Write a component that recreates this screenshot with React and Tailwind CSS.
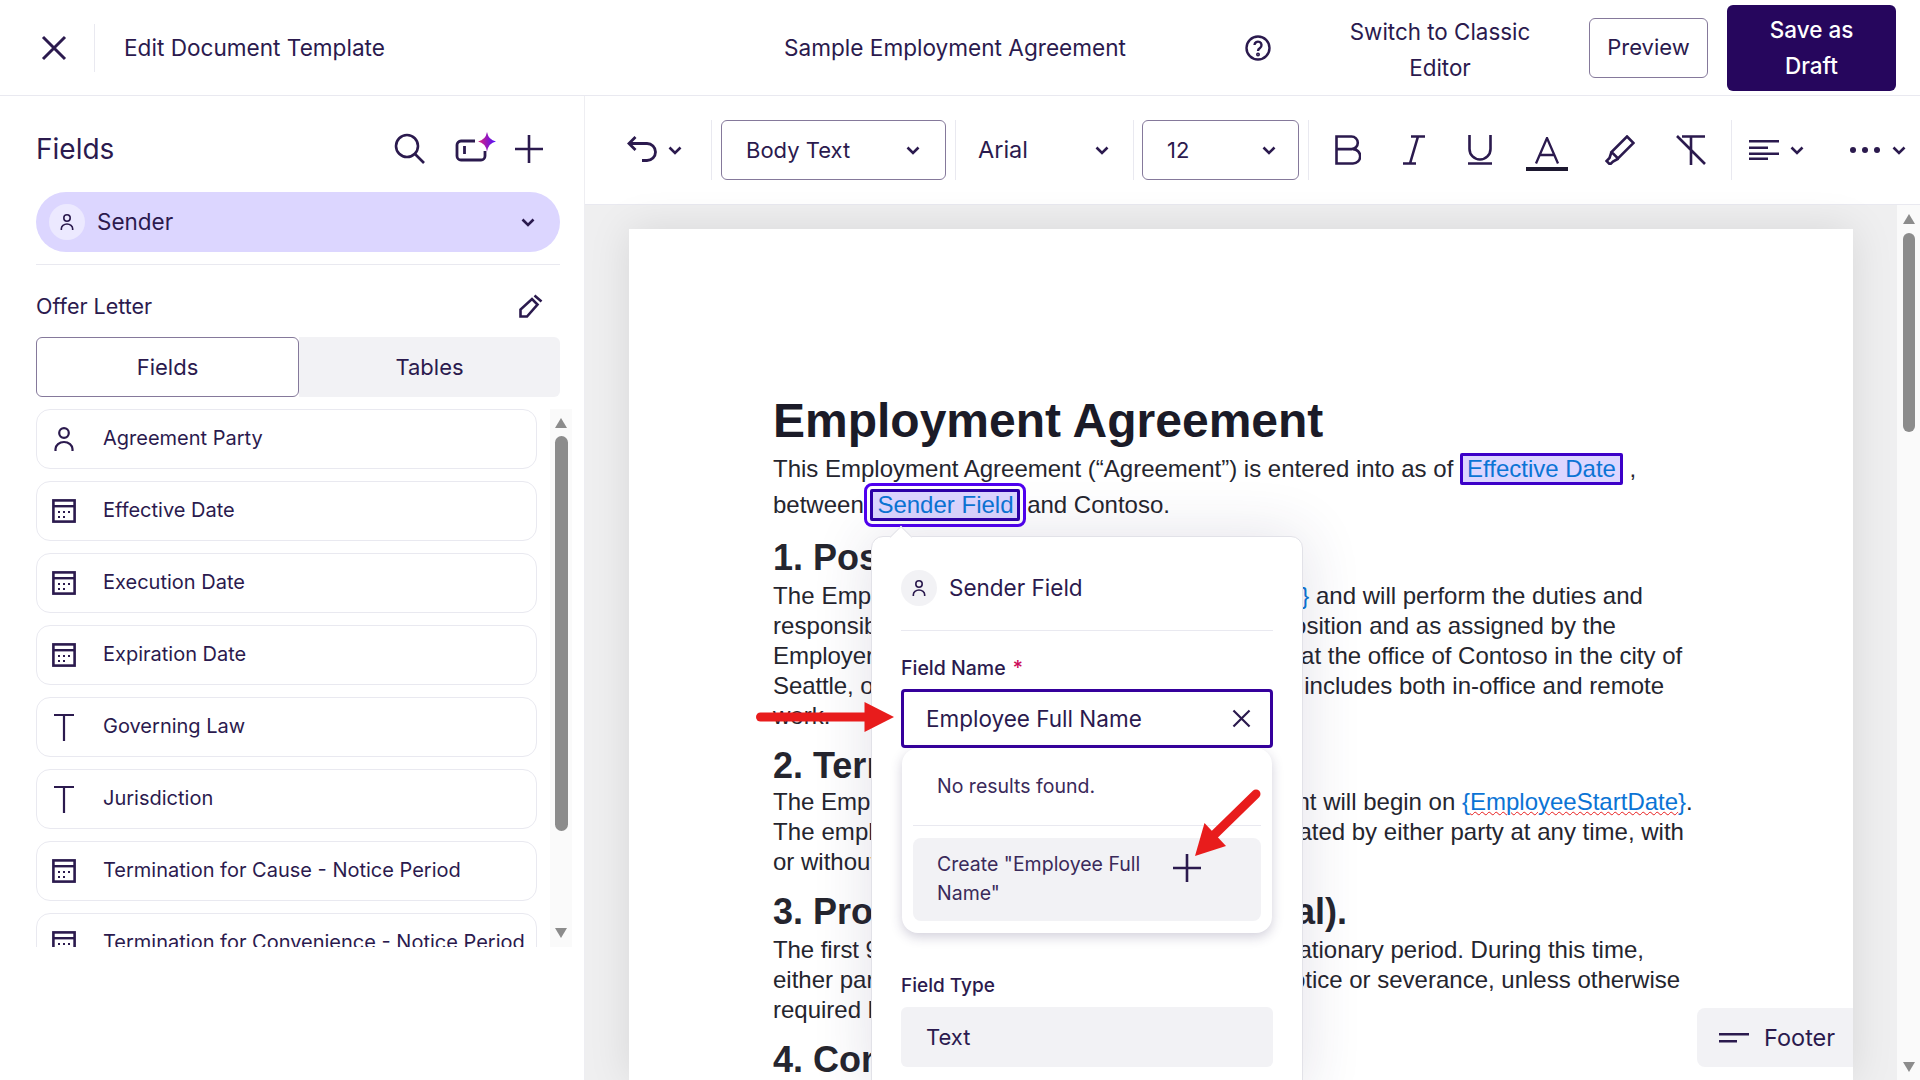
import React from 'react';

const UI_FONT = { fontFamily: 'Inter, sans-serif' };

const Chevron = ({ className = '' }) => (
    <svg width="14" height="9" viewBox="0 0 14 9" fill="none" stroke="currentColor" strokeWidth="2.6" className={`shrink-0 ${className}`}>
        <path d="M1.5 1.5 7 7l5.5-5.5" />
    </svg>
);

const PersonIcon = ({ size = 24, sw = 2.2 }) => (
    <svg width={size} height={size} viewBox="0 0 24 24" fill="none" stroke="currentColor" strokeWidth={sw} className="shrink-0">
        <circle cx="12" cy="6" r="4.800" />
        <path d="M3.500 24v-2a8.500 7 0 0 1 17 0v2" />
    </svg>
);

const CalendarIcon = () => (
    <svg width="24" height="24" viewBox="0 0 24 24" fill="none" className="shrink-0">
        <rect x="1.400" y="1.400" width="21.200" height="21.200" stroke="currentColor" strokeWidth="2.600" />
        <rect x="1" y="6" width="22" height="2.400" fill="currentColor" />
        <path d="M6 12h2v2H6zM11 12h2v2h-2zM16 12h2v2h-2zM6 17h2v2H6zM11 17h2v2h-2z" fill="currentColor" />
    </svg>
);

const TextIcon = () => (
    <svg width="24" height="28" viewBox="0 0 24 28" fill="none" stroke="currentColor" strokeWidth="2.200" className="shrink-0">
        <path d="M2 2h20M12 2v26" />
    </svg>
);

const CloseIcon = ({ size = 26, sw = 3 }) => (
    <svg width={size} height={size} viewBox="0 0 26 26" fill="none" stroke="currentColor" strokeWidth={sw} className="shrink-0">
        <path d="M2 2l22 22M24 2 2 24" />
    </svg>
);

const PlusIcon = ({ size = 28 }) => (
    <svg width={size} height={size} viewBox="0 0 28 28" fill="none" stroke="currentColor" strokeWidth="2.600" className="shrink-0">
        <path d="M14 0v28M0 14h28" />
    </svg>
);

const fields = [
    ['person', 'Agreement Party'],
    ['date', 'Effective Date'],
    ['date', 'Execution Date'],
    ['date', 'Expiration Date'],
    ['text', 'Governing Law'],
    ['text', 'Jurisdiction'],
    ['date', 'Termination for Cause - Notice Period'],
    ['date', 'Termination for Convenience - Notice Period'],
];

const FieldRow = ({ type, label }) => (
    <div className="flex h-[60px] shrink-0 items-center rounded-[14px] border border-[#e9e9f0] bg-white">
        <div className="flex w-[66px] justify-center pr-[12px]">
            {type === 'person' && <PersonIcon size={24} />}
            {type === 'date' && <CalendarIcon />}
            {type === 'text' && <TextIcon />}
        </div>
        <span className="pb-[2px] text-[20px] whitespace-nowrap">{label}</span>
    </div>
);

const ScrollArrow = ({ down }) => (
    <svg width="12" height="10" viewBox="0 0 12 10" className="shrink-0" fill="#8c8c8c">
        <path d={down ? 'M0 0h12L6 10z' : 'M6 0l6 10H0z'} />
    </svg>
);

const Sidebar = () => (
    <aside className="flex w-[585px] shrink-0 flex-col border-r border-[#eeeef2] pl-[36px] pr-[24px]">
        <div className="mt-[23px] flex h-[60px] items-center pr-[17px]">
            <h2 className="flex-1 text-[28px]">Fields</h2>
            <svg width="34" height="34" viewBox="0 0 34 34" fill="none" stroke="currentColor" strokeWidth="2.600" className="mr-[29px]">
                <circle cx="15" cy="14" r="11" />
                <path d="M23 22l9 9" />
            </svg>
            <svg width="42" height="36" viewBox="0 0 42 36" fill="none" className="mr-[18px]">
                <defs>
                    <linearGradient id="spark" x1="0" x2="1" y1="0" y2="0">
                        <stop offset="0" stopColor="#e0207a" />
                        <stop offset="1" stopColor="#4a10ff" />
                    </linearGradient>
                </defs>
                <path d="M20 10H6a4 4 0 0 0-4 4v11a4 4 0 0 0 4 4h20a4 4 0 0 0 4-4v-5" stroke="currentColor" strokeWidth="2.800" />
                <path d="M9.500 15v8" stroke="currentColor" strokeWidth="2.800" />
                <path d="M32 1q1.500 8 9 9.500-7.500 1.500-9 10-1.500-8.500-9-10 7.500-1.500 9-9.500z" fill="url(#spark)" />
            </svg>
            <PlusIcon size={28} />
        </div>
        <div className="mt-[13px] flex h-[60px] items-center rounded-full bg-[#dcd6ff] pl-[13px] pr-[25px]">
            <div className="flex h-[36px] w-[36px] items-center justify-center rounded-full bg-[#ece9ff]">
                <PersonIcon size={16} sw={2.4} />
            </div>
            <span className="ml-[12px] flex-1 text-[22.5px]">Sender</span>
            <Chevron />
        </div>
        <div className="mt-[12px] border-t border-[#e9e9f0]" />
        <div className="mt-[26px] flex h-[30px] items-center pr-[17px]">
            <span className="flex-1 text-[21.500px]">Offer Letter</span>
            <svg width="24" height="24" viewBox="0 0 24 24" fill="none" stroke="currentColor" strokeWidth="2.600">
                <path d="M1.500 22.500v-7L13 5l5.500 5.500L8 22.500zM15.500 1.500l7 6" />
            </svg>
        </div>
        <div className="mt-[16px] flex h-[60px] text-[22px]">
            <div className="flex flex-1 items-center justify-center rounded-[6px] border border-[#85799b] bg-white">Fields</div>
            <div className="flex flex-1 items-center justify-center rounded-r-[6px] bg-[#f2f2f5]">Tables</div>
        </div>
        <div className="-mr-[12px] mt-[12px] flex h-[538px] gap-[13px] overflow-hidden">
            <div className="flex w-[501px] shrink-0 flex-col gap-[12px]">
                {fields.map(([type, label]) => (
                    <FieldRow key={label} type={type} label={label} />
                ))}
            </div>
            <div className="flex w-[22px] shrink-0 flex-col items-center bg-[#fafafa] pt-[9px]">
                <ScrollArrow />
                <div className="mt-[8px] h-[395px] w-[13px] rounded-full bg-[#8c8c8c]" />
                <div className="mt-[97px]">
                    <ScrollArrow down />
                </div>
            </div>
        </div>
    </aside>
);

const Divider = ({ className = '' }) => <div className={`h-[60px] w-px shrink-0 bg-[#e9e9f0] ${className}`} />;

const Select = ({ label, className = '' }) => (
    <div className={`flex h-[60px] shrink-0 items-center justify-between rounded-[6px] border border-[#85799b] pl-[24px] ${className}`}>
        <span>{label}</span>
        <Chevron />
    </div>
);

const ToolIcon = ({ w, children }) => (
    <div className={`flex shrink-0 justify-center ${w}`}>{children}</div>
);

const Toolbar = () => (
    <div className="flex h-[109px] shrink-0 items-center border-b border-[#e9e9f0] pl-[42px] text-[22px]">
        <svg width="30" height="26" viewBox="0 0 30 26" fill="none" stroke="currentColor" strokeWidth="2.800" className="mb-[3px] shrink-0">
            <path d="M8.500 1 2 7.500 8.500 14M2 7.500h18a8.500 8.500 0 0 1 0 17h-5" />
        </svg>
        <Chevron className="ml-[11px]" />
        <Divider className="ml-[29px]" />
        <Select label="Body Text" className="ml-[9px] w-[225px] pr-[25px]" />
        <Divider className="ml-[9px]" />
        <div className="flex w-[177px] shrink-0 items-center justify-between pl-[22px] pr-[24px]">
            <span className="text-[23.500px]">Arial</span>
            <Chevron />
        </div>
        <Divider />
        <Select label="12" className="ml-[8px] w-[157px] pr-[22px]" />
        <Divider className="ml-[9px]" />
        <ToolIcon w="w-[78px]">
            <svg width="26" height="30" viewBox="0 0 26 30" fill="none" stroke="currentColor" strokeWidth="2.600">
                <path d="M1.500 14V1.500h15a6.300 6.300 0 0 1 0 12.600h-15zm0 0v14.500h16.500a7.200 7.200 0 0 0 0-14.400" />
            </svg>
        </ToolIcon>
        <ToolIcon w="w-[54px]">
            <svg width="22" height="30" viewBox="0 0 22 30" fill="none" stroke="currentColor" strokeWidth="2.600">
                <path d="M8 1.500h14M0 28.500h13M15 1.500 7 28.500" />
            </svg>
        </ToolIcon>
        <ToolIcon w="ml-[6px] w-[66px]">
            <svg width="24" height="30" viewBox="0 0 24 30" fill="none" stroke="currentColor" strokeWidth="2.600">
                <path d="M1.500 0v14a10.500 10.500 0 0 0 21 0V0M0 28.500h24" />
            </svg>
        </ToolIcon>
        <ToolIcon w="mt-[8px] w-[68px]">
            <svg width="42" height="34" viewBox="0 0 42 34" fill="none">
                <path d="M10 26.500 21 1l11 25.500M13.500 18h15" stroke="currentColor" strokeWidth="2.300" />
                <rect y="30" width="42" height="4" fill="#1d1830" />
            </svg>
        </ToolIcon>
        <ToolIcon w="w-[78px]">
            <svg width="30" height="30" viewBox="0 0 30 30" fill="none" stroke="currentColor" strokeWidth="2.600">
                <path d="M22 1.500 28.500 8 13 23.500 6.500 17zM6.500 17l-2 6-3 3 3.500 3.500 3-3 5.500-3" />
            </svg>
        </ToolIcon>
        <ToolIcon w="w-[64px]">
            <svg width="30" height="30" viewBox="0 0 30 30" fill="none" stroke="currentColor" strokeWidth="2.600">
                <path d="M6 1.500h23M15 1.500V30M1 1l28 28" />
            </svg>
        </ToolIcon>
        <Divider className="ml-[8px]" />
        <svg width="30" height="20" viewBox="0 0 30 20" fill="currentColor" className="ml-[17px] shrink-0">
            <path d="M0 0h30v2.500H0zM0 6.500h19V9H0zM0 12.500h30V15H0zM0 17.500h19V20H0z" />
        </svg>
        <Chevron className="ml-[11px]" />
        <svg width="32" height="6" viewBox="0 0 32 6" fill="currentColor" className="ml-[46px] shrink-0">
            <circle cx="3" cy="3" r="3" />
            <circle cx="15" cy="3" r="3" />
            <circle cx="27" cy="3" r="3" />
        </svg>
        <Chevron className="ml-[10px]" />
    </div>
);

const H2 = ({ children, className = 'mt-[12px] leading-[46px]' }) => (
    <h2 className={`text-[36px] font-bold whitespace-nowrap ${className}`}>{children}</h2>
);

const Line = ({ children }) => <div className="h-[30px] leading-[30px] whitespace-nowrap">{children}</div>;

const FieldTag = ({ children, active }) => (
    <span className={`inline-block rounded-[2px] border-[3px] bg-[#dcd6ff] px-[4px] leading-[26px] text-[#0b74d5] ${active ? 'border-[#2d00a8] outline-[3px] outline-offset-[3px] outline-[#5000f0]' : 'border-[#3c00c8]'}`}>
        {children}
    </span>
);

const DocumentPage = () => (
    <div className="ml-[44px] mt-[24px] flex-1 overflow-hidden bg-white pl-[144px] pt-[158px] text-[24px] text-[#25252e] shadow-[0_0_40px_rgba(0,0,0,0.1)]" style={{ fontFamily: '"Liberation Sans", Arial, sans-serif' }}>
        <h1 className="h-[64px] text-[48px] font-bold leading-[68px] text-[#1b1b28] whitespace-nowrap">Employment Agreement</h1>
        <div className="h-[36px] leading-[35px] whitespace-nowrap">
            This Employment Agreement (“Agreement”) is entered into as of <FieldTag>Effective Date</FieldTag> ,
        </div>
        <div className="h-[36px] leading-[36px] whitespace-nowrap">
            between <FieldTag active>Sender Field</FieldTag> and Contoso.
        </div>
        <H2 className="mt-[12px] leading-[46px]">1. Position and Duties.</H2>
        <Line><span className="tracking-[0.12px]">The Employee will be hired as </span><span className="text-[#0b74d5]">{'{EmployeeJobTitle}'}</span> and will perform the duties and</Line>
        <Line><span className="tracking-[0.05px]">responsibilities typically associated with such a </span>position and as assigned by the</Line>
        <Line><span className="tracking-[-0.05px]">Employer. The Employee shall be working largely </span>at the office of Contoso in the city of</Line>
        <Line><span className="tracking-[-0.1px]">Seattle, or according to the hybrid schedule which </span>includes both in-office and remote</Line>
        <Line>work.</Line>
        <H2 className="mt-[13px] leading-[43px]">2. Term of Employment.</H2>
        <Line>The Employee's employment under this Agreement will begin on <span className="text-[#0b74d5]">{'{'}<span className="underline decoration-wavy decoration-[#e81c1c] decoration-1">EmployeeStartDate</span>{'}'}</span>.</Line>
        <Line><span className="tracking-[0.09px]">The employment relationship shall also be </span>terminated by either party at any time, with</Line>
        <Line>or without cause.</Line>
        <H2>3. Probationary Period (Optional).</H2>
        <Line><span className="tracking-[-0.09px]">The first 90 days of the employment will be a </span>probationary period. During this time,</Line>
        <Line>either party may terminate employment without notice or severance, unless otherwise</Line>
        <Line>required by law.</Line>
        <H2>4. Compensation.</H2>
    </div>
);

const FieldPopover = () => (
    <div className="absolute left-[871px] top-[536px] h-[560px] w-[432px] rounded-[12px] border border-[#e2e2e8] bg-white px-[29px] pt-[33px] shadow-[0_0_60px_rgba(50,40,90,0.14)]">
        <div className="absolute -top-[8px] left-[21px] h-[16px] w-[16px] rotate-45 border-l border-t border-[#e2e2e8] bg-white" />
        <div className="flex items-center border-b border-[#e9e9f0] pb-[24px]">
            <div className="flex h-[36px] w-[36px] items-center justify-center rounded-full bg-[#f2f2f5]">
                <PersonIcon size={16} sw={2.4} />
            </div>
            <span className="ml-[12px] text-[22.500px]">Sender Field</span>
        </div>
        <div className="mt-[25px] h-[24px] text-[19.500px] font-medium leading-[24px]">
            Field Name <span className="ml-[2px] text-[#cc0a5a]">*</span>
        </div>
        <div className="mt-[9px] flex h-[59px] items-center justify-between rounded-[4px] border-[3px] border-[#35009c] pl-[22px] pr-[19px] text-[22.500px]">
            <span>Employee Full Name</span>
            <CloseIcon size={19} sw={3} />
        </div>
        <div className="mx-px h-[185px] rounded-[16px] bg-white px-[11px] pt-[24px] text-[19.500px] leading-[29px] shadow-[0_4px_12px_rgba(50,40,90,0.22)]">
            <div className="pl-[24px] text-[#3a2a5a]">No results found.</div>
            <div className="mt-[24px] border-t border-[#e9e9f0]" />
            <div className="mt-[12px] flex h-[83px] rounded-[8px] bg-[#f2f2f5] pl-[24px] pt-[12px] text-[#3a2a5a]">
                <div className="w-[236px]">Create "Employee Full Name"</div>
                <div className="mt-[4px] text-[#2b1a4e]">
                    <PlusIcon size={28} />
                </div>
            </div>
        </div>
        <div className="mt-[41px] h-[24px] text-[19px] font-medium leading-[24px]">Field Type</div>
        <div className="mt-[9px] flex h-[60px] items-center rounded-[6px] bg-[#f2f2f5] pl-[25px] text-[22px]">Text</div>
    </div>
);

const App = () => (
    <div className="relative h-[1080px] w-[1920px] overflow-hidden bg-white text-[#2b1a4e]" style={UI_FONT}>
        <header className="flex h-[96px] items-center border-b border-[#e9e9f0]">
            <div className="flex w-[94px] justify-center pl-[14px]">
                <CloseIcon />
            </div>
            <div className="h-[48px] w-px bg-[#e9e9f0]" />
            <div className="ml-[29px] w-[660px] text-[22.600px]">Edit Document Template</div>
            <div className="w-[461px] text-[22.600px]">Sample Employment Agreement</div>
            <svg width="26" height="26" viewBox="0 0 26 26" fill="none" stroke="currentColor" strokeWidth="2.400" className="shrink-0">
                <circle cx="13" cy="13" r="11.500" />
                <path d="M9.500 10a3.500 3.500 0 1 1 5.500 3c-1.300.9-2 1.500-2 3" />
                <circle cx="13" cy="19.500" r=".8" />
            </svg>
            <div className="ml-[69px] w-[200px] pt-[4px] text-center text-[22.400px] leading-[36px]">Switch to Classic Editor</div>
            <div className="ml-[49px] flex h-[60px] w-[119px] items-center justify-center rounded-[6px] border border-[#85799b] text-[22px]">Preview</div>
            <div className="ml-[19px] flex h-[86px] w-[169px] items-center justify-center rounded-[6px] bg-[#26065d] px-[30px] text-center text-[22.500px] font-medium leading-[36px] text-white">Save as Draft</div>
        </header>
        <div className="flex h-[984px]">
            <Sidebar />
            <main className="flex min-w-0 flex-1 flex-col">
                <Toolbar />
                <div className="flex min-h-0 flex-1 bg-[#efeff0]">
                    <div className="flex min-w-0 flex-1 flex-col">
                        <DocumentPage />
                    </div>
                    <div className="ml-[44px] flex w-[23px] shrink-0 flex-col items-center bg-[#fafafa] pt-[9px]">
                        <ScrollArrow />
                        <div className="mt-[9px] h-[199px] w-[12px] rounded-full bg-[#8c8c8c]" />
                        <div className="mt-[630px]">
                            <ScrollArrow down />
                        </div>
                    </div>
                </div>
            </main>
        </div>
        <FieldPopover />
        {/* Footer tab sits on the page edge */}
        <div className="absolute left-[1697px] top-[1008px] flex h-[59px] w-[156px] items-center rounded-l-[8px] bg-[#f2f2f5] pl-[22px] text-[23.500px]">
            <svg width="30" height="12" viewBox="0 0 30 12" fill="currentColor" className="shrink-0">
                <path d="M0 1h30v2.500H0zM0 8h18v2.500H0z" />
            </svg>
            <span className="ml-[15px]">Footer</span>
        </div>
        {/* Red annotation arrows */}
        <svg width="138" height="30" viewBox="0 0 138 30" className="absolute left-[756px] top-[702px]">
            <path d="M4.500 15H112" stroke="#e81c1c" strokeWidth="9" strokeLinecap="round" />
            <path d="M108.500 0 138 15l-29.500 15z" fill="#e81c1c" />
        </svg>
        <svg width="72" height="72" viewBox="0 0 72 72" className="absolute left-[1190px] top-[788px]">
            <path d="M66 6 24 47" stroke="#e81c1c" strokeWidth="9" strokeLinecap="round" />
            <path d="M5 68l9.500-33L36 58z" fill="#e81c1c" />
        </svg>
    </div>
);

export default App;
